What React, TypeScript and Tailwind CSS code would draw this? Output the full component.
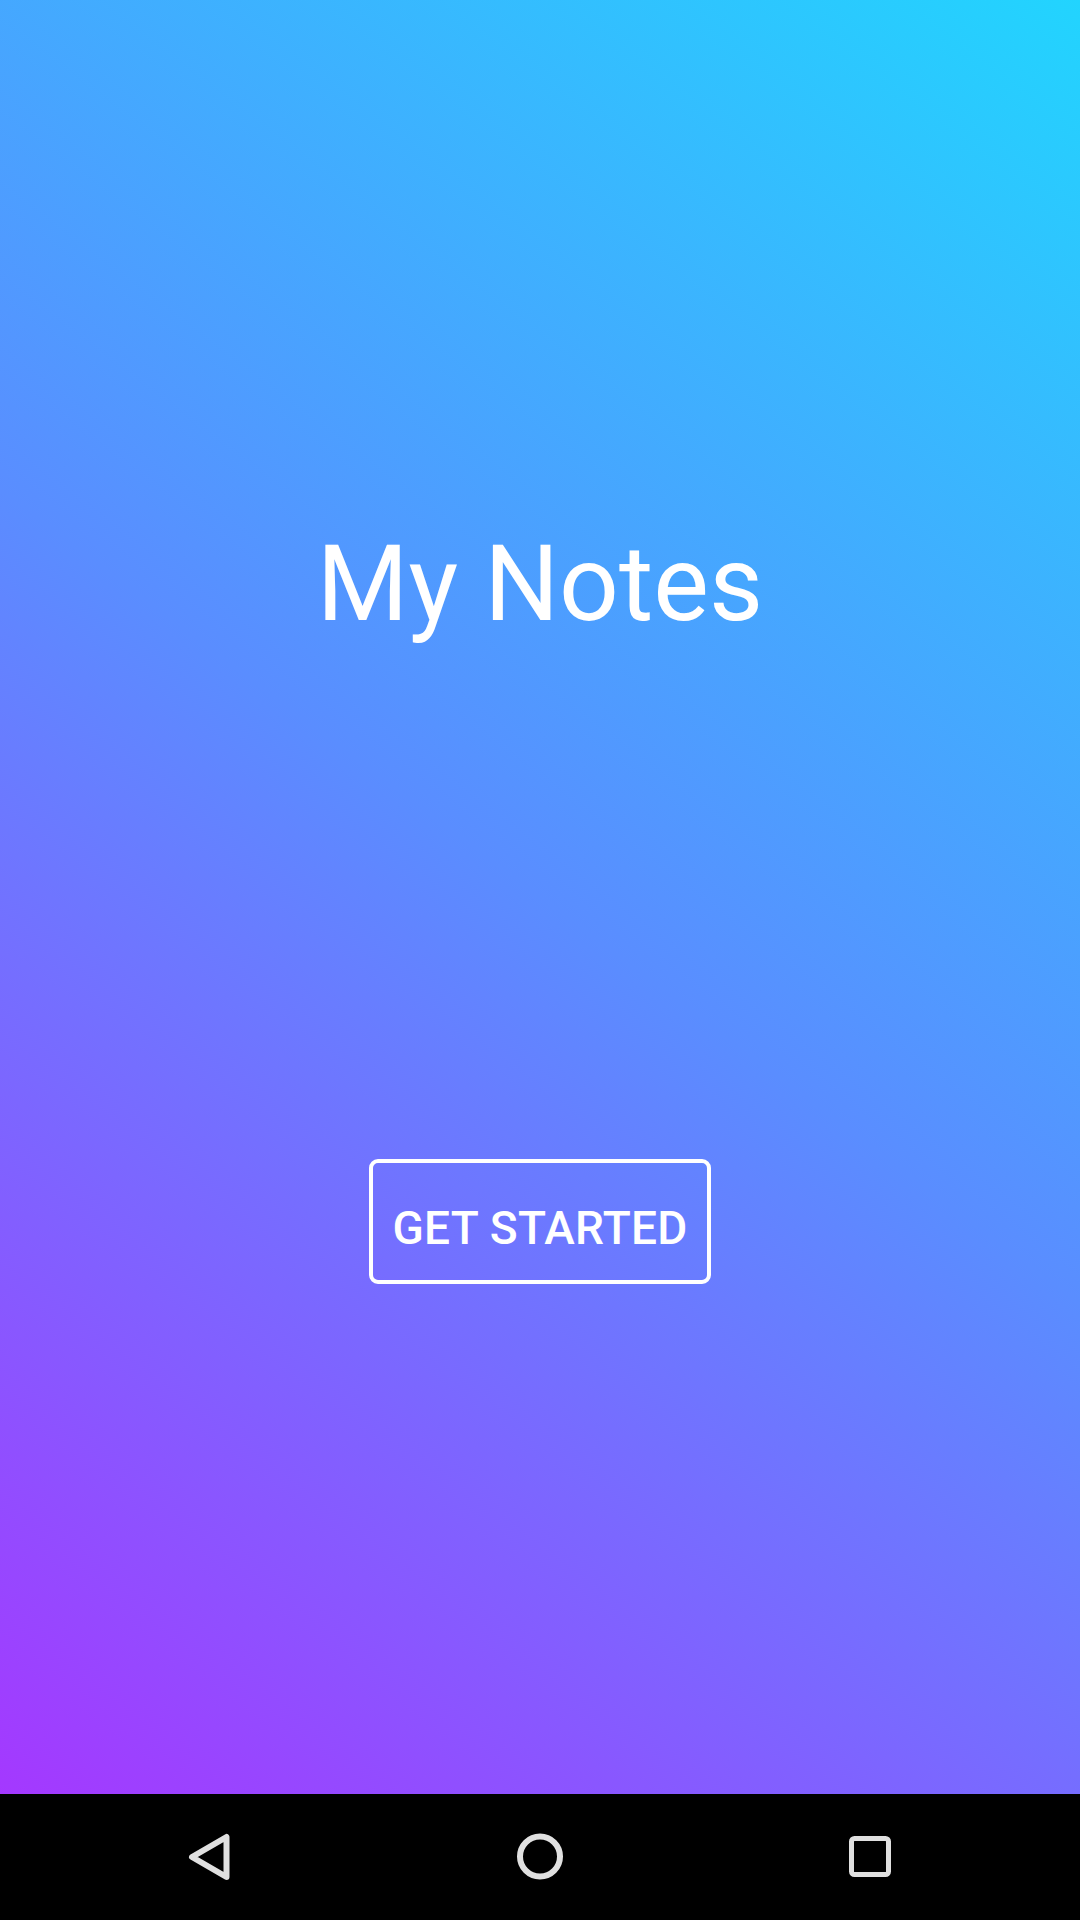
export default function App() {
  return (
    <div className="flex h-[1920px] w-[1080px] flex-col font-['Roboto',sans-serif]">
      <main className="flex h-[1794px] flex-col items-center bg-[linear-gradient(37deg,#a438ff_0%,#5a8dff_50%,#22d4fe_100%)] text-white">
        <h1 className="mt-[532px] text-[105px] leading-none font-normal">My Notes</h1>
        <button className="mt-[522px] flex h-[125px] w-[342px] items-center justify-center rounded-[9px] border-[4px] border-white pt-[12px] text-[46px] leading-none font-medium tracking-[0.3px] uppercase">
          Get Started
        </button>
      </main>

      <nav className="flex h-[126px] items-center justify-center gap-[220px] bg-black">
        <div className="flex w-[110px] justify-center">
          <svg width="48" height="48" viewBox="0 0 48 48" fill="none" stroke="#e0e0e0" strokeWidth="6" strokeLinejoin="round">
            <path d="M40.5 4V44L6 24Z" />
          </svg>
        </div>
        <div className="flex w-[110px] justify-center">
          <svg width="48" height="48" viewBox="0 0 48 48" fill="none" stroke="#e0e0e0" strokeWidth="6">
            <circle cx="24" cy="23.5" r="20" />
          </svg>
        </div>
        <div className="flex w-[110px] justify-center">
          <svg width="48" height="48" viewBox="0 0 48 48" fill="none" stroke="#e0e0e0" strokeWidth="5">
            <rect x="5.5" y="5.5" width="37" height="36" rx="3" />
          </svg>
        </div>
      </nav>
    </div>
  );
}
